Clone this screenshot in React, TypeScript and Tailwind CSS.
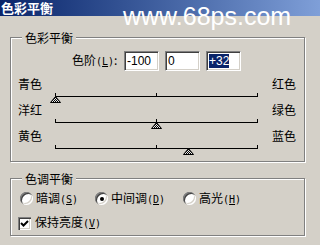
import { useId } from 'react'

const BG = 'bg-[#d4d0c8]'

function Mn({ c }: { c: string }) {
  return (
    <span className="font-['DejaVu_Sans_Mono',monospace] text-[10px]">
      (<span className="underline underline-offset-1">{c}</span>)
    </span>
  )
}

function Field({ children }: { children: React.ReactNode }) {
  return (
    <div className="w-[35px] h-[20px] bg-white border border-t-[#808080] border-l-[#808080] border-b-white border-r-white shadow-[inset_1px_1px_0_#404040,inset_-1px_-1px_0_#d4d0c8] pl-[2px] pt-[2px] font-['Liberation_Sans',Arial,sans-serif] text-[12px] leading-[14px]">
      {children}
    </div>
  )
}

function Thumb() {
  const id = useId()
  return (
    <svg width="11" height="7" viewBox="0 0 11 7" className="block">
      <defs>
        <pattern id={id} width="2" height="2" patternUnits="userSpaceOnUse">
          <rect width="2" height="2" fill="#e8e8e8" />
          <rect width="1" height="1" fill="#000" />
          <rect x="1" y="1" width="1" height="1" fill="#000" />
        </pattern>
      </defs>
      <polygon points="5.5,0.5 10.5,6.5 0.5,6.5" fill={`url(#${id})`} stroke="#000" strokeWidth="1" />
    </svg>
  )
}

function SliderRow({ left, right, value }: { left: string; right: string; value: number }) {
  const pos = ((value + 100) / 200) * 202
  return (
    <div className="h-[26px]">
      <div className="flex justify-between leading-[14px] h-[14px]">
        <span>{left}</span>
        <span>{right}</span>
      </div>
      <div className="relative ml-[37px] mt-[5px] w-[203px] h-[1px] bg-black">
        <div className="absolute left-0 bottom-0 w-[1px] h-[4px] bg-black" />
        <div className="absolute left-[101px] bottom-0 w-[1px] h-[4px] bg-black" />
        <div className="absolute right-0 bottom-0 w-[1px] h-[4px] bg-black" />
        <div className="absolute top-0" style={{ left: pos - 5 }}>
          <Thumb />
        </div>
      </div>
    </div>
  )
}

function Radio({ checked, label, mn, className }: { checked?: boolean; label: string; mn: string; className?: string }) {
  return (
    <div className={`flex items-center gap-[3px] ${className ?? ''}`}>
      <div className="w-[13px] h-[13px] rounded-full bg-white shadow-[inset_1px_1px_0_#808080,inset_2px_2px_0_#404040,inset_-1px_-1px_0_#fff,inset_-2px_-2px_0_#d4d0c8] flex items-center justify-center">
        {checked && <div className="w-[4px] h-[4px] rounded-full bg-black" />}
      </div>
      <span className="leading-[14px]">
        {label}
        <Mn c={mn} />
      </span>
    </div>
  )
}

export default function App() {
  return (
    <div className={`relative w-[320px] h-[245px] overflow-hidden ${BG} text-black text-[12px] font-['Noto_Sans_CJK_SC',sans-serif]`}>
      {/* title bar */}
      <div className="h-[16px] flex items-center bg-linear-to-r from-[#0a246a] to-[#7f9fd8] pl-[1px] text-white font-bold text-[13px] leading-[14px]">
        色彩平衡
      </div>

      {/* watermark */}
      <div className="absolute left-[123px] top-[4px] text-white text-[25px] leading-[25px] font-['Liberation_Sans',Arial,sans-serif]">
        www.68ps.com
      </div>

      <fieldset className="ml-[10px] mt-[14px] w-[295px] h-[132px] border border-[#808080] shadow-[1px_1px_0_#fff,inset_1px_1px_0_#fff]">
        <legend className={`ml-[11px] px-[3px] leading-[15px] ${BG}`}>色彩平衡</legend>
        <div className="flex items-center pl-[61px] mt-[6px] h-[20px]">
          <span className="w-[52px] leading-[14px]">
            色阶<Mn c="L" />:
          </span>
          <div className="flex gap-[6px]">
            <Field>-100</Field>
            <Field>0</Field>
            <Field>
              <span className="bg-[#0a246a] text-white">+32</span>
            </Field>
          </div>
        </div>
        <div className="mt-[6px] pl-[7px] pr-[8px]">
          <SliderRow left="青色" right="红色" value={-100} />
          <SliderRow left="洋红" right="绿色" value={0} />
          <SliderRow left="黄色" right="蓝色" value={32} />
        </div>
      </fieldset>

      <fieldset className="ml-[10px] mt-[9px] w-[295px] h-[65px] border border-[#808080] shadow-[1px_1px_0_#fff,inset_1px_1px_0_#fff]">
        <legend className={`ml-[11px] px-[3px] leading-[15px] ${BG}`}>色调平衡</legend>
        <div className="flex mt-[6px] pl-[9px] h-[13px]">
          <Radio label="暗调" mn="S" className="w-[75px]" />
          <Radio label="中间调" mn="D" checked className="w-[88px]" />
          <Radio label="高光" mn="H" />
        </div>
        <div className="flex items-center gap-[4px] mt-[10px] pl-[7px]">
          <div className="w-[13px] h-[13px] bg-white shadow-[inset_1px_1px_0_#808080,inset_2px_2px_0_#404040,inset_-1px_-1px_0_#fff,inset_-2px_-2px_0_#d4d0c8]">
            <svg width="13" height="13" viewBox="0 0 13 13" className="block">
              <polyline points="3,6 5.5,8.5 10,4" fill="none" stroke="#000" strokeWidth="2" />
            </svg>
          </div>
          <span className="leading-[14px]">
            保持亮度<Mn c="V" />
          </span>
        </div>
      </fieldset>
    </div>
  )
}
